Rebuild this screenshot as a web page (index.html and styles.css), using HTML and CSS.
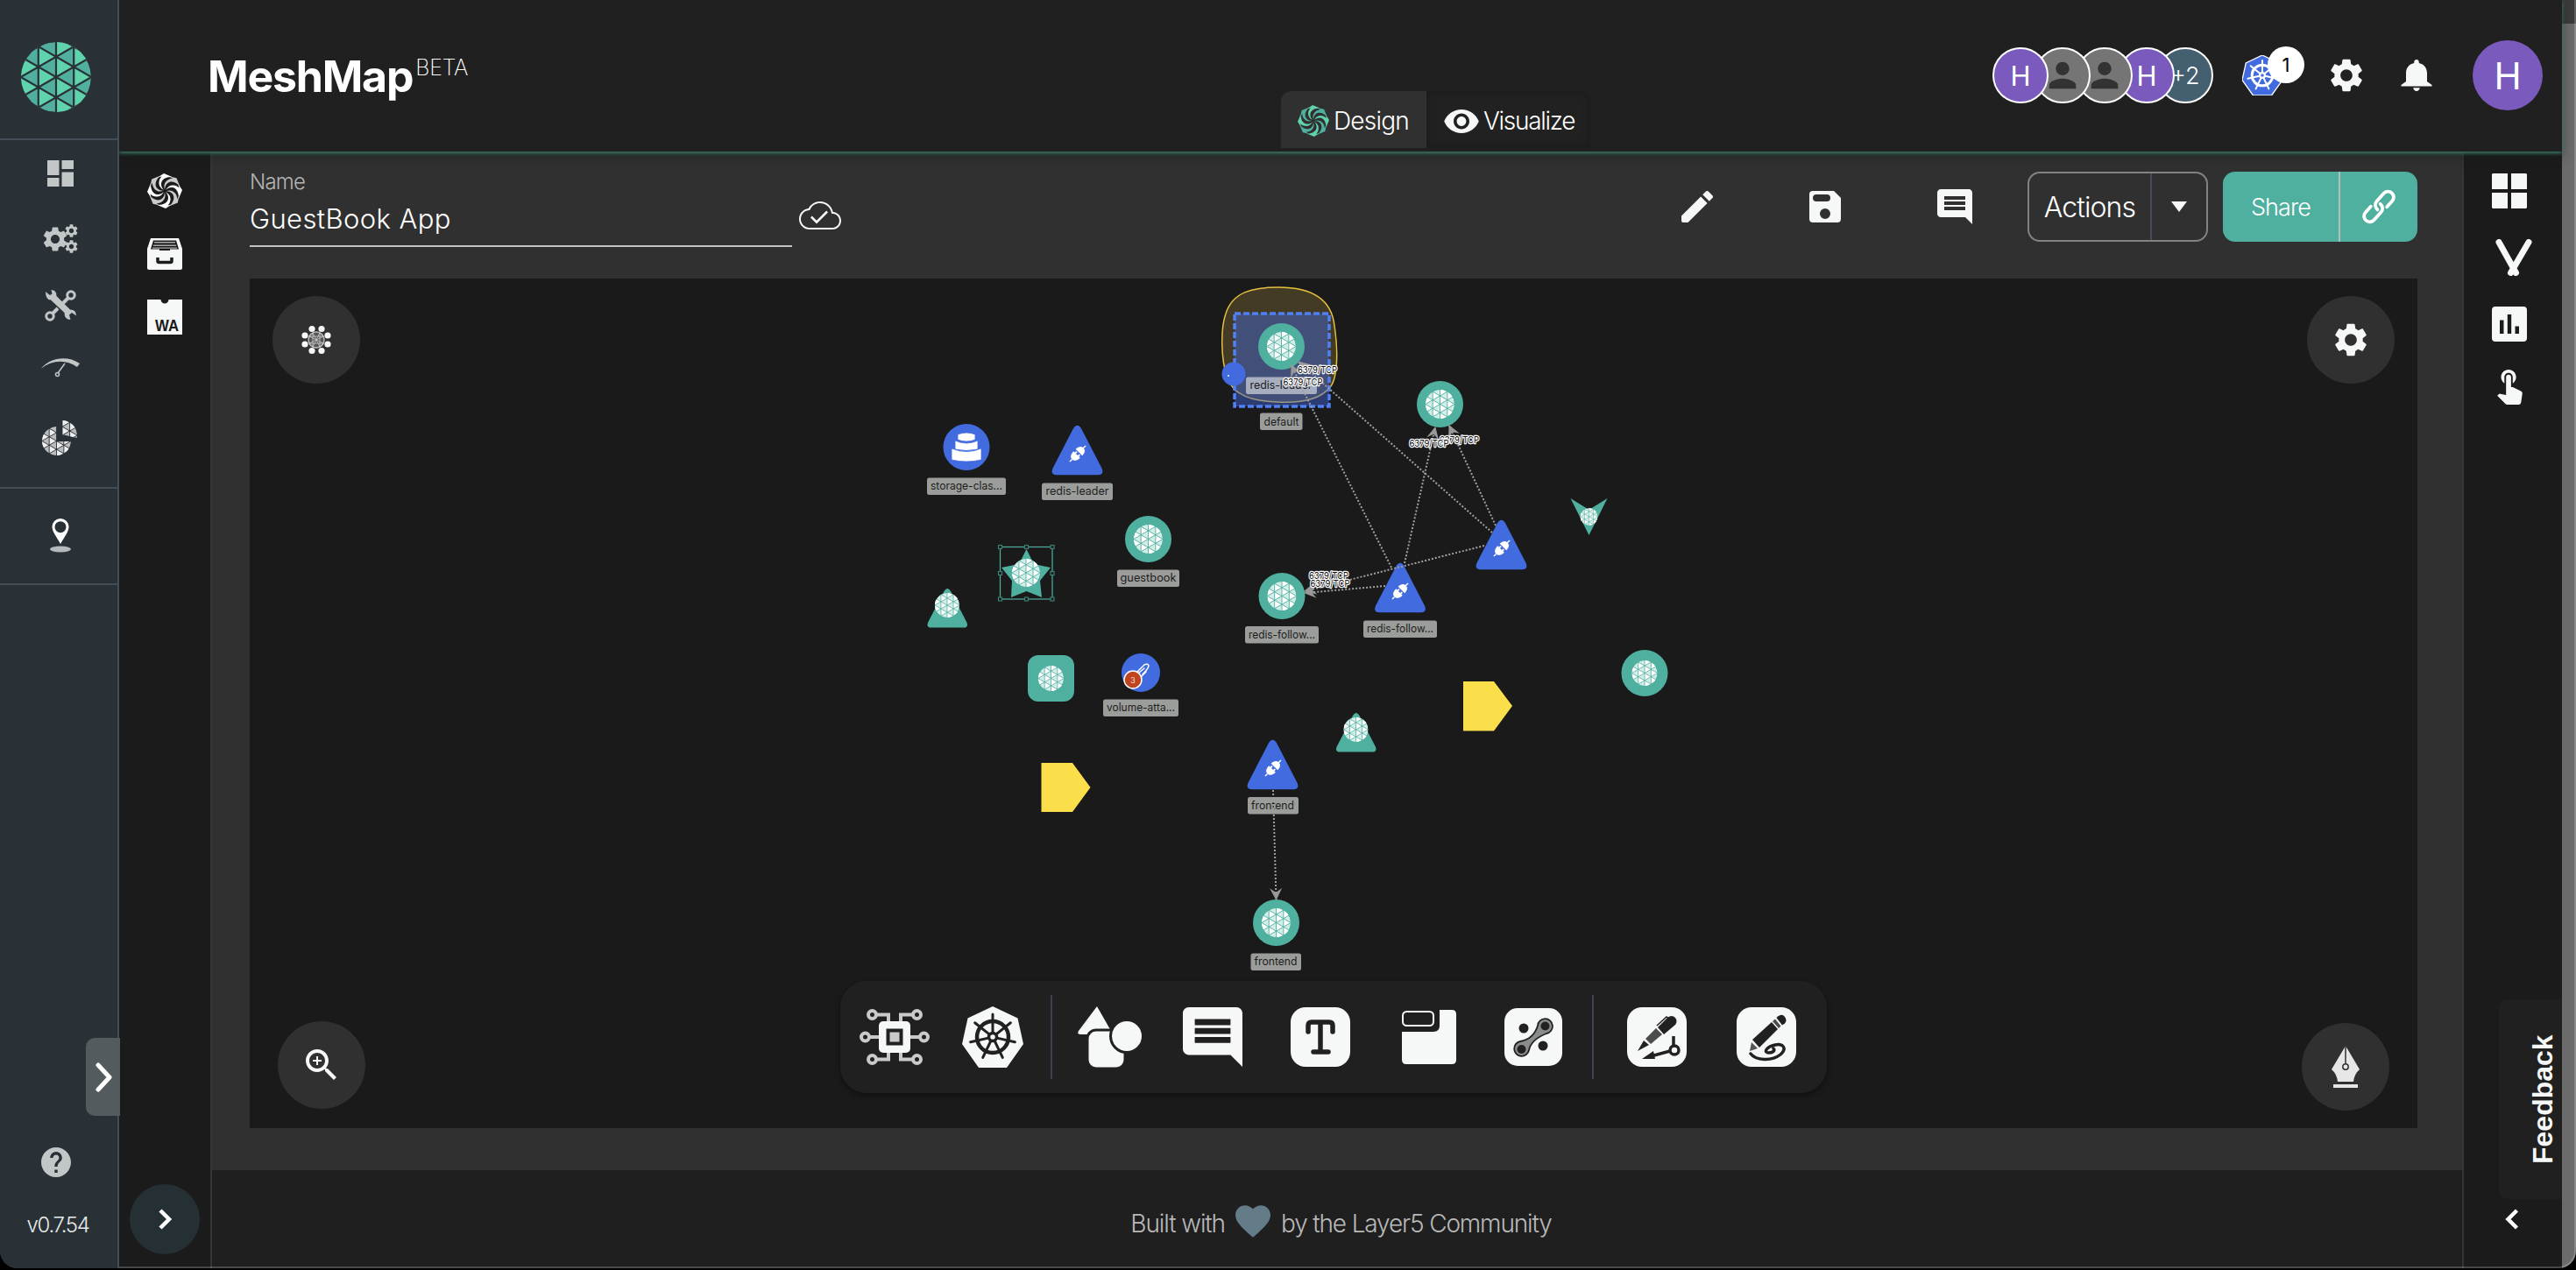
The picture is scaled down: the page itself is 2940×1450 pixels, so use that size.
FILE: index.html
```html
<!DOCTYPE html>
<html lang="en">
<head>
<meta charset="utf-8">
<title>MeshMap</title>
<link rel="stylesheet" href="styles.css">
</head>
<body>
<svg class="sprite" width="0" height="0">
  <defs>
    <clipPath id="disc"><circle r="40"/></clipPath>
    <symbol id="mesh" viewBox="-40 -40 80 80">
      <g clip-path="url(#disc)">
        <circle class="mesh-dark" r="40"/>
        <path class="mesh-light" d="M-40.4 0V23.2L-20.2 11.6zM-40.4 0V-23.2L-20.2 -11.6zM-20.2 -34.8V-11.6L0 -23.2zM-20.2 -11.6V11.6L0 0zM-20.2 11.6V34.8L0 23.2zM0 -46.4V-23.2L20.2 -34.8zM0 -23.2V0L20.2 -11.6zM0 0V23.2L20.2 11.6zM0 23.2V46.4L20.2 34.8zM20.2 -34.8V-11.6L40.4 -23.2zM20.2 -11.6V11.6L40.4 0zM20.2 11.6V34.8L40.4 23.2z"/>
        <path class="mesh-gap" d="M0 -42V42M-20.2 -42V42M20.2 -42V42M-40.4 -23.2L40.4 23.2M-40.4 23.2L40.4 -23.2M-40.4 -46.4L40.4 0M-40.4 0L40.4 46.4M-40.4 46.4L40.4 0M-40.4 0L40.4 -46.4M-40.4 -69.6L40.4 -23.2M-40.4 -23.2L40.4 -69.6M-40.4 69.6L40.4 23.2M-40.4 23.2L40.4 69.6"/>
      </g>
    </symbol>
    <path id="blade" d="M-11 -13.500L-1 -20L8.500 -16C1 -16.200 -3.500 -13 -4 -8.500C-4.200 -5.500 -3 -3 -1 -1.200C-5 -3 -7 -6.500 -6.500 -10.500C-6.200 -13 -5 -15 -3.500 -16.500C-7 -15.800 -9 -14.800 -11 -13.500z"/>
    <symbol id="swirl" viewBox="-20 -20 40 40">
      <g class="sw-a"><use href="#blade"/><use href="#blade" transform="rotate(90)"/><use href="#blade" transform="rotate(180)"/><use href="#blade" transform="rotate(270)"/></g>
      <g class="sw-b"><use href="#blade" transform="rotate(45)"/><use href="#blade" transform="rotate(135)"/><use href="#blade" transform="rotate(225)"/><use href="#blade" transform="rotate(315)"/></g>
    </symbol>
    <symbol id="cog" viewBox="2 2 20 20"><path d="M19.14 12.94c.04-.3.06-.61.06-.94 0-.32-.02-.64-.07-.94l2.030-1.580c.18-.14.23-.41.12-.61l-1.920-3.320c-.12-.22-.37-.29-.59-.22l-2.390.96c-.5-.38-1.030-.7-1.620-.94l-.36-2.540c-.04-.24-.24-.41-.48-.41h-3.840c-.24 0-.43.17-.47.41l-.36 2.540c-.59.24-1.130.57-1.620.94l-2.390-.96c-.22-.08-.47 0-.59.22L2.740 8.870c-.12.21-.08.47.12.61l2.030 1.580c-.05.3-.09.63-.09.94s.02.64.07.94l-2.030 1.580c-.18.14-.23.41-.12.61l1.920 3.320c.12.22.37.29.59.22l2.390-.96c.5.38 1.030.7 1.620.94l.36 2.540c.05.24.24.41.48.41h3.840c.24 0 .44-.17.47-.41l.36-2.540c.59-.24 1.130-.56 1.620-.94l2.390.96c.22.08.47 0 .59-.22l1.920-3.320c.12-.22.07-.47-.12-.61l-2.010-1.580zM12 15.6c-1.980 0-3.600-1.620-3.600-3.600s1.620-3.600 3.600-3.600 3.600 1.620 3.600 3.600-1.620 3.600-3.600 3.600z"/></symbol>
    <symbol id="person" viewBox="0 0 24 24"><path d="M12 12c2.210 0 4-1.790 4-4s-1.790-4-4-4-4 1.790-4 4 1.790 4 4 4zm0 2c-2.670 0-8 1.340-8 4v2h16v-2c0-2.660-5.330-4-8-4z"/></symbol>
    <symbol id="comment" viewBox="2 2 20 20"><path d="M21.990 4c0-1.100-.89-2-1.990-2H4c-1.100 0-2 .9-2 2v12c0 1.100.9 2 2 2h14l4 4-.01-18zM18 14H6v-2h12v2zm0-3H6V9h12v2zm0-3H6V6h12v2z"/></symbol>
    <symbol id="helm" viewBox="-35 -35 70 70">
      <path class="helm-bg" d="M0 -35L28.500 -21.500L35 8L16 35H-16L-35 8L-28.500 -21.500z"/>
      <g class="helm-fg">
        <circle r="18" fill="none" stroke-width="4.500"/>
        <g stroke-width="3">
          <path d="M0 -5V-26"/><path d="M0 -5V-26" transform="rotate(51.430)"/><path d="M0 -5V-26" transform="rotate(102.860)"/><path d="M0 -5V-26" transform="rotate(154.290)"/><path d="M0 -5V-26" transform="rotate(205.710)"/><path d="M0 -5V-26" transform="rotate(257.140)"/><path d="M0 -5V-26" transform="rotate(308.570)"/>
        </g>
        <circle r="4.500" fill="none" stroke-width="3.500"/>
      </g>
    </symbol>
    <symbol id="plug" viewBox="-12 -12 24 24">
      <g transform="rotate(45)" fill="#fff">
        <path d="M-.8 -14h1.600v4.500h-1.600zM-.8 14h1.600v-4.500h-1.600zM-5.800 -2.200C-5.800 -7.500 -3.500 -10 0 -10S5.800 -7.500 5.800 -2.200zM-5.800 1.500H5.800C5.800 7 3.500 10 0 10S-5.800 7 -5.800 1.500zM-3.600 -1h2v3h-2zM1.600 -1h2v3h-2z"/>
      </g>
    </symbol>
    <symbol id="tri" viewBox="0 0 60 58"><path d="M25 4.500Q30 -4 35 4.500L58.500 50Q61.500 57.500 54 57.800H6Q-1.500 57.500 1.500 50z"/></symbol>
    <marker id="vee" viewBox="0 0 14 14" refX="13" refY="7" markerWidth="14" markerHeight="14" markerUnits="userSpaceOnUse" orient="auto"><path d="M0 0L14 7L0 14L5 7z" fill="#999"/></marker>
  </defs>
</svg>

<div class="window">
  <aside class="sidebar">
    <div class="brand"><svg class="mesh" width="80" height="80"><use href="#mesh"/></svg></div>
    <nav class="nav">
      <a><svg width="30" height="30" viewBox="0 0 30 30"><path d="M0 0h13.500v17H0zM16.500 0H30v10H16.500zM0 20h13.500v10H0zM16.500 13.500H30V30H16.500z"/></svg></a>
      <a><svg width="42" height="34" viewBox="0 0 42 34"><use href="#cog" x="1" y="3" width="28" height="28"/><use href="#cog" x="26" y="0" width="15" height="15"/><use href="#cog" x="26" y="18" width="15" height="15"/></svg></a>
      <a><svg width="36" height="36" viewBox="0 0 36 36"><g fill="none" stroke="#c3c6c7"><circle cx="30" cy="6" r="4.200" stroke-width="3"/><circle cx="6" cy="30" r="4.200" stroke-width="3"/><path d="M27 9L21 15M15 21L9 27" stroke-width="4"/></g><path d="M1 2l5 4 2.500-1.500-1-4.500q6 0 6 7l15.500 15.500q7 0 7 7l-5-3.500-3 2.500 1.500 5.500q-7 0-7-8L7 11.500q-6 0-6-9.500z"/></svg></a>
      <a><svg width="44" height="24" viewBox="0 0 44 24"><path d="M0 13C9 1 29 -3 44 7l-3 4C28 2 12 3 0 13z"/><path d="M19 18L27 7" fill="none" stroke="#c3c6c7" stroke-width="1.500"/><circle cx="18.500" cy="19.500" r="2" fill="none" stroke="#c3c6c7" stroke-width="1.500"/></svg></a>
      <a><svg class="mesh mesh-grey" width="40" height="40" viewBox="0 0 40 40"><defs><clipPath id="body"><path d="M0 0H17V24L33 24V40H0z"/></clipPath><clipPath id="slice"><path d="M23 0H40V20L23 16z"/></clipPath></defs><g clip-path="url(#body)"><use href="#mesh" x="0" y="7" width="33" height="33"/></g><g clip-path="url(#slice)"><use href="#mesh" x="6" y="0" width="34" height="34"/></g></svg></a>
    </nav>
    <div class="nav-map"><svg width="26" height="40" viewBox="0 0 26 40"><path fill="#fff" fill-rule="evenodd" d="M13 29C8 20 3.500 15 3.500 9.500a9.500 9.500 0 0 1 19 0C22.500 15 18 20 13 29zM13 3.200a6.500 6.500 0 1 0 0 13 6.500 6.500 0 0 0 0-13z"/><ellipse cx="13" cy="35" rx="12" ry="3.500" fill="#b5babc"/></svg></div>
    <div class="side-foot">
      <svg width="34" height="34" viewBox="2 2 20 20"><path d="M12 2C6.480 2 2 6.480 2 12s4.480 10 10 10 10-4.480 10-10S17.520 2 12 2zm1 17h-2v-2h2v2zm2.070-7.750l-.9.92C13.450 12.900 13 13.500 13 15h-2v-.5c0-1.100.45-2.100 1.170-2.830l1.240-1.260c.37-.36.59-.86.59-1.410 0-1.100-.9-2-2-2s-2 .9-2 2H8c0-2.210 1.790-4 4-4s4 1.790 4 4c0 .88-.36 1.680-.93 2.250z"/></svg>
      <span class="version">v0.7.54</span>
    </div>
    <button class="side-toggle"><svg width="20" height="36" viewBox="0 0 20 36"><path d="M3 4L16 18L3 32" fill="none" stroke="#fff" stroke-width="5" stroke-linecap="round" stroke-linejoin="round"/></svg></button>
  </aside>

  <div class="app">
    <header class="header">
      <h1 class="title">MeshMap<span class="beta">BETA</span></h1>
      <div class="tabs">
        <div class="tab active"><svg class="swirl-green" width="36" height="36"><use href="#swirl"/></svg><span class="t-design">Design</span></div>
        <div class="tab"><svg width="40" height="27" viewBox="1 4.500 22 15"><path d="M12 4.500C7 4.500 2.730 7.610 1 12c1.730 4.390 6 7.500 11 7.500s9.270-3.110 11-7.500c-1.730-4.390-6-7.500-11-7.500zM12 17c-2.760 0-5-2.240-5-5s2.240-5 5-5 5 2.240 5 5-2.240 5-5 5zm0-8c-1.660 0-3 1.340-3 3s1.340 3 3 3 3-1.340 3-3-1.340-3-3-3z"/></svg><span class="t-visual">Visualize</span></div>
      </div>
      <div class="header-right">
        <div class="avatars">
          <span class="av purple">H</span>
          <span class="av grey"><svg width="46" height="46"><use href="#person"/></svg></span>
          <span class="av grey"><svg width="46" height="46"><use href="#person"/></svg></span>
          <span class="av purple">H</span>
          <span class="av more">+2</span>
        </div>
        <div class="k8s"><svg class="helm-blue" width="46" height="46"><use href="#helm"/></svg><span class="badge">1</span></div>
        <svg class="h-cog" width="38" height="38"><use href="#cog"/></svg>
        <svg class="h-bell" width="36" height="36" viewBox="2.250 2.500 19.500 19.500"><path d="M12 22c1.100 0 2-.9 2-2h-4c0 1.100.89 2 2 2zm6.500-6v-5c0-3.070-1.640-5.640-5-6.320V4c0-.83-.67-1.500-1.500-1.500s-1.500.67-1.500 1.500v.68C7.130 5.360 5.500 7.920 5.500 11v5l-3 2.200v.8h19v-.8z"/></svg>
        <span class="me">H</span>
      </div>
    </header>

    <div class="body">
      <div class="rail left-rail">
        <svg class="swirl-white" width="40" height="40"><use href="#swirl"/></svg>
        <svg width="40" height="36" viewBox="0 0 40 36"><path d="M4 0H36L40 12V34Q40 36 38 36H2Q0 36 0 34V12z"/><path d="M7 2.500H33L36 12.500H26V14H14V12.500H4z" fill="#1b1b1b"/><path d="M8 4H32v1.600H8zM7 7.500H33v1.600H7zM6 10.500H34v1.200H6z" fill="#aaa"/><path d="M12 22v4q0 1.500 1.500 1.500h13Q28 27.500 28 26v-4" fill="none" stroke="#1b1b1b" stroke-width="3.500"/></svg>
        <svg width="40" height="40" viewBox="0 0 40 40"><path d="M0 0H15.500a4.500 4.500 0 0 0 9 0H40V40H0z"/><text class="wa" x="9" y="36" textLength="27" lengthAdjust="spacingAndGlyphs">WA</text></svg>
        <button class="rail-toggle"><svg width="16" height="24" viewBox="0 0 16 24"><path d="M3 2L13 12L3 22" fill="none" stroke="#fff" stroke-width="4.500"/></svg></button>
      </div>

      <main class="main">
        <div class="bar">
          <div class="field"><label>Name</label><div class="value">GuestBook App</div></div>
          <svg class="cloud" width="48" height="48" viewBox="0 0 24 24"><path d="M19.350 10.040C18.670 6.590 15.640 4 12 4 9.110 4 6.610 5.640 5.360 8.040 2.350 8.360 0 10.900 0 14c0 3.310 2.690 6 6 6h13c2.760 0 5-2.240 5-5 0-2.640-2.050-4.780-4.650-4.960zM19 19H6c-2.800 0-5-2.200-5-5 0-2.500 1.900-4.700 4.600-5l.5-.05.25-.45C7.300 6.200 9.500 5 12 5c3.100 0 5.800 2.200 6.400 5.250l.15.75.75.050c2.100.15 3.700 1.850 3.700 3.950 0 2.200-1.800 4-4 4zM10 14.900l-2.600-2.600-.9.9L10 16.700l6.500-6.500-.9-.9z"/></svg>
          <div class="tools">
            <svg width="36" height="36" viewBox="3 3 18 18"><path d="M3 17.250V20q0 1 1 1h2.750L17.810 9.940l-3.750-3.750L3 17.250zM20.710 7.040c.39-.39.39-1.020 0-1.410l-2.340-2.340c-.39-.39-1.020-.39-1.410 0l-1.830 1.830 3.750 3.750 1.830-1.830z"/></svg>
            <svg width="36" height="36" viewBox="0 0 36 36"><path fill-rule="evenodd" d="M4 0H28L36 8V32Q36 36 32 36H4Q0 36 0 32V4Q0 0 4 0zM8 4a4 4 0 0 0 0 8H20a4 4 0 0 0 0-8zM18 20a6 6 0 1 0 0 12 6 6 0 0 0 0-12z"/></svg>
            <svg width="40" height="40"><use href="#comment"/></svg>
          </div>
          <div class="actions"><span>Actions</span><i><svg width="18" height="12" viewBox="0 0 18 12"><path d="M0 0H18L9 12z"/></svg></i></div>
          <div class="share"><span>Share</span><i><svg width="42" height="42" viewBox="-21 -21 42 42"><g transform="rotate(-48)" fill="none" stroke="#fff" stroke-width="3.800" stroke-linecap="round"><path d="M-6 -7H-15A6.500 6.500 0 0 0 -15 6H-3A6.500 6.500 0 0 0 3.500 -1"/><path d="M6 7H15A6.500 6.500 0 0 0 15 -6H3A6.500 6.500 0 0 0 -3.500 1"/></g></svg></i></div>
        </div>

        <div class="canvas">
          <svg class="graph" viewBox="285 318 2474 970">
            <path d="M1459 328C1500 328 1520 343 1523 372C1528 405 1526 435 1517 443C1505 458 1480 460 1458 459C1430 458 1408 452 1401 432C1393 410 1393 375 1399 358C1407 333 1430 328 1459 328z" fill="#443b25" stroke="#e5bf3f" stroke-width="1.500"/>
            <rect x="1409" y="358" width="108" height="106" fill="#4169e1" fill-opacity=".45" stroke="#4f80f5" stroke-width="3.500" stroke-dasharray="7 3"/>
            <circle cx="1408" cy="427" r="13.500" fill="#426bdf"/><circle cx="1402" cy="429" r="1" fill="#fff"/>

            <g class="green">
              <circle cx="1462.500" cy="395.500" r="26.500"/><circle cx="1643.500" cy="461.500" r="26.500"/><circle cx="1310.500" cy="615.500" r="26.500"/><circle cx="1463" cy="680.500" r="26.500"/><circle cx="1877" cy="768.500" r="26.500"/><circle cx="1456.500" cy="1053.500" r="26.500"/>
              <rect x="1173" y="748" width="53" height="53" rx="12"/>
              <path d="M1171.500 627L1180 644L1199 648L1187 663L1189 682L1171.500 675L1154 682L1155 663L1143 648L1163 644z"/>
              <use href="#tri" x="1058" y="671" width="46.500" height="46.500"/><use href="#tri" x="1524.500" y="813" width="46.500" height="46.500"/>
              <path d="M1792.500 569L1813.500 582L1834.500 569L1813.500 611z"/>
            </g>
            <g class="mesh mesh-white">
              <use href="#mesh" x="1446" y="379" width="33" height="33"/><use href="#mesh" x="1627" y="445" width="33" height="33"/><use href="#mesh" x="1294" y="599" width="33" height="33"/><use href="#mesh" x="1446.500" y="664" width="33" height="33"/><use href="#mesh" x="1862.500" y="754" width="29" height="29"/><use href="#mesh" x="1440" y="1037" width="33" height="33"/><use href="#mesh" x="1185" y="760" width="29" height="29"/><use href="#mesh" x="1155" y="638" width="32" height="32"/><use href="#mesh" x="1067" y="677" width="28" height="28"/><use href="#mesh" x="1533.500" y="819" width="28" height="28"/><use href="#mesh" x="1803.500" y="580" width="20" height="20"/>
            </g>
            <g class="blue">
              <circle cx="1103" cy="510.500" r="26.500"/><circle cx="1302" cy="768" r="22"/>
              <use href="#tri" x="1200" y="485" width="59" height="58"/><use href="#tri" x="1423" y="844" width="59" height="58"/><use href="#tri" x="1684" y="593" width="59" height="58"/><use href="#tri" x="1568.500" y="642" width="59" height="58"/>
            </g>
            <use href="#plug" x="1219" y="507" width="22" height="22"/><use href="#plug" x="1442" y="866" width="22" height="22"/><use href="#plug" x="1703" y="615" width="22" height="22"/><use href="#plug" x="1587" y="664" width="22" height="22"/>
            <path d="M1093 496Q1103 492 1113 496V502Q1103 506 1093 502zM1090 503Q1103 509 1116 503V513Q1103 516 1090 513zM1086 512Q1103 519 1120 512V525Q1103 529 1086 525z" fill="#fff" stroke="#426bdf" stroke-width=".8"/>
            <g fill="none" stroke="#fff" stroke-width="1.500" stroke-linecap="round"><path d="M1297 768L1306 759Q1310 757 1311 760Q1311 763 1304 770M1300 768L1306 763M1302 773L1308 767"/></g>
            <circle cx="1293" cy="776" r="10" fill="#c0441f" stroke="#fff" stroke-width="1.500"/><text class="count" x="1293" y="779.500">3</text>
            <path d="M1188.500 871H1224L1244.500 899L1224 927H1188.500zM1670 778H1705L1726 806L1705 834.500H1670z" fill="#fbdf4a"/>
            <g fill="none" stroke="#50af9f" stroke-width="1.200"><rect x="1141.500" y="624.500" width="59.500" height="59.500"/><g fill="#1a1a1a" stroke="#3c7f74"><rect x="1139.500" y="622.500" width="4" height="4"/><rect x="1169.500" y="622.500" width="4" height="4"/><rect x="1199" y="622.500" width="4" height="4"/><rect x="1139.500" y="652.500" width="4" height="4"/><rect x="1199" y="652.500" width="4" height="4"/><rect x="1139.500" y="682" width="4" height="4"/><rect x="1169.500" y="682" width="4" height="4"/><rect x="1199" y="682" width="4" height="4"/></g></g>

            <g class="tags">
              <rect x="1422" y="430.500" width="81" height="19.500" rx="2.500" fill="#a7aec0"/><rect x="1438" y="471.500" width="48.500" height="19.500" rx="2.500"/><rect x="1058" y="545.500" width="90" height="19.500" rx="2.500"/><rect x="1189" y="551.500" width="81" height="19.500" rx="2.500"/><rect x="1275" y="650.500" width="71" height="19.500" rx="2.500"/><rect x="1421" y="715" width="84" height="19.500" rx="2.500"/><rect x="1556" y="708.500" width="84" height="19.500" rx="2.500"/><rect x="1259" y="798.500" width="86" height="19.500" rx="2.500"/><rect x="1424" y="910" width="58" height="19.500" rx="2.500"/><rect x="1427.500" y="1088.500" width="57.500" height="19.500" rx="2.500"/>
            </g>
            <g class="names">
              <text x="1426.500" y="444" textLength="71" lengthAdjust="spacingAndGlyphs">redis-leader</text><text x="1442.500" y="485.500" textLength="40" lengthAdjust="spacingAndGlyphs">default</text><text x="1062" y="559" textLength="82" lengthAdjust="spacingAndGlyphs">storage-clas...</text><text x="1193.500" y="565" textLength="72" lengthAdjust="spacingAndGlyphs">redis-leader</text><text x="1278.500" y="664" textLength="64" lengthAdjust="spacingAndGlyphs">guestbook</text><text x="1425" y="729" textLength="76" lengthAdjust="spacingAndGlyphs">redis-follow...</text><text x="1560" y="722" textLength="76" lengthAdjust="spacingAndGlyphs">redis-follow...</text><text x="1263" y="812" textLength="78" lengthAdjust="spacingAndGlyphs">volume-atta...</text><text x="1428" y="924" textLength="49" lengthAdjust="spacingAndGlyphs">frontend</text><text x="1431.500" y="1102" textLength="49" lengthAdjust="spacingAndGlyphs">frontend</text>
            </g>
            <g class="edges">
              <path d="M1588 648L1487 445L1474 417"/><path d="M1703 608L1482 413"/><path d="M1603 643L1638 488"/><path d="M1707 600L1654 486"/><path d="M1694 623L1489 675"/><path d="M1581 669L1489 677"/><path d="M1453 902L1456.500 1027"/>
            </g>
            <g class="ports">
              <text x="1481" y="426" textLength="45" lengthAdjust="spacingAndGlyphs">6379/TCP</text><text x="1464.500" y="439.500" textLength="45" lengthAdjust="spacingAndGlyphs">6379/TCP</text><text x="1643" y="505.500" textLength="45" lengthAdjust="spacingAndGlyphs">6379/TCP</text><text x="1608.500" y="509.500" textLength="45" lengthAdjust="spacingAndGlyphs">6379/TCP</text><text x="1494" y="661" textLength="45" lengthAdjust="spacingAndGlyphs">6379/TCP</text><text x="1495.500" y="669.500" textLength="45" lengthAdjust="spacingAndGlyphs">6379/TCP</text>
            </g>
          </svg>

          <button class="fab fab-layout"><svg width="34" height="34" viewBox="-17 -17 34 34"><circle r="9" fill="#555" stroke="#bbb" stroke-width="1.500"/><path d="M-8 -4L8 4M-8 4L8 -4M-4 -8L4 8M4 -8L-4 8M-8 -4H8M-8 4H8M-4 -8V8M4 -8V8" stroke="#ccc" stroke-width=".8"/><g><circle cx="-5" cy="-12.500" r="3.600"/><circle cx="6" cy="-12.500" r="3.600"/><circle cx="-5" cy="12.500" r="3.600"/><circle cx="6" cy="12.500" r="3.600"/><circle cx="-13" cy="-5" r="3.600"/><circle cx="13" cy="-5" r="3.600"/><circle cx="-13" cy="5" r="3.600"/><circle cx="13" cy="5" r="3.600"/></g></svg></button>
          <button class="fab fab-cog"><svg width="38" height="38"><use href="#cog"/></svg></button>
          <button class="fab fab-zoom"><svg width="48" height="48" viewBox="0 0 24 24"><path d="M15.500 14h-.79l-.28-.27C15.410 12.590 16 11.110 16 9.500 16 5.910 13.090 3 9.500 3S3 5.910 3 9.500 5.910 16 9.500 16c1.610 0 3.090-.59 4.230-1.570l.27.28v.79l5 4.990L20.490 19l-4.990-5zm-6 0C7.010 14 5 11.990 5 9.500S7.010 5 9.500 5 14 7.010 14 9.500 11.990 14 9.500 14zm2.500-4h-2v2H9v-2H7V9h2V7h1v2h2v1z"/></svg></button>
          <button class="fab fab-pen"><svg width="32" height="48" viewBox="0 0 32 48"><path d="M16 0L32 27Q26 32 25 41H7Q6 32 0 27zM2 44H30V48H2z" fill="#e6e6e6"/><path d="M16 0V21" stroke="#303030" stroke-width="1.500"/><circle cx="16" cy="24" r="3.200" fill="#e6e6e6" stroke="#303030" stroke-width="1.500"/></svg></button>

          <div class="dock">
            <div class="group g1">
              <svg width="80" height="66" viewBox="-40 -33 80 66"><g fill="none" stroke="#c9cbcb" stroke-width="4"><circle cx="-25.500" cy="-25.500" r="4.500"/><circle cx="25.500" cy="-25.500" r="4.500"/><circle cx="-25.500" cy="25.500" r="4.500"/><circle cx="25.500" cy="25.500" r="4.500"/><circle cx="-33.500" cy="0" r="4.500"/><circle cx="33.500" cy="0" r="4.500"/><path d="M-20 -25.500H-7V-17M20 -25.500H7V-17M-20 25.500H-7V17M20 25.500H7V17M-28 0H-18M28 0H18"/></g><rect x="-18" y="-18" width="36" height="36" rx="5"/><rect x="-7.500" y="-7.500" width="15" height="15" fill="#c9cbcb" stroke="#212121" stroke-width="4"/></svg>
              <svg class="helm-white" width="70" height="70"><use href="#helm"/></svg>
            </div>
            <div class="group g2">
              <svg width="74" height="74" viewBox="0 0 74 74"><path d="M22 2L38 30Q40 34 36 34H3Q-1 34 1 30z"/><rect x="11" y="29" width="43" height="44" rx="10" stroke="#212121" stroke-width="3"/><circle cx="56" cy="36" r="18.500" stroke="#212121" stroke-width="3"/></svg>
              <svg width="68" height="68"><use href="#comment"/></svg>
              <svg width="68" height="68" viewBox="0 0 68 68"><rect width="68" height="68" rx="17"/><path d="M20 28V21Q20 17 24 17H44Q48 17 48 21V28M34 17V51M26 51H43" fill="none" stroke="#212121" stroke-width="5.500" stroke-linecap="round"/></svg>
              <svg width="62" height="62" viewBox="0 0 62 62"><path d="M43 0H57Q62 0 62 5V57Q62 62 57 62H5Q0 62 0 57V25H36Q43 25 43 18z"/><rect x="1" y="2" width="35" height="16" rx="4.500" fill="none" stroke="#f6f8f7" stroke-width="2"/></svg>
              <svg width="66" height="66" viewBox="0 0 66 66"><rect width="66" height="66" rx="15"/><circle cx="22" cy="23" r="5.500" fill="#212121"/><circle cx="44" cy="43" r="5.500" fill="#212121"/><path d="M38 20A8.500 8.500 0 1 1 48 29C38 33 30 38 28 48A8.500 8.500 0 1 1 18 38C29 36 35 30 38 20z" fill="#8a8c8b" stroke="#212121" stroke-width="1.800"/><circle cx="46.500" cy="20.500" r="5" fill="#212121"/><circle cx="19.500" cy="47" r="5" fill="#212121"/></svg>
            </div>
            <div class="group g3">
              <svg width="68" height="68" viewBox="0 0 68 68"><rect width="68" height="68" rx="17"/><path d="M12 50L19 38L25 43z" fill="#212121"/><path d="M21 36L33 24L40 31L27 42z" fill="#4c4c4c"/><path d="M35 23L46 12Q51 8 55 12Q58 16 55 20L42 31z" fill="#212121"/><path d="M34 21L45 11L48 13" fill="none" stroke="#212121" stroke-width="1.500"/><path d="M53 33V43M49 50L27 56" fill="none" stroke="#212121" stroke-width="3.500"/><circle cx="54" cy="49" r="5" fill="none" stroke="#212121" stroke-width="3.500"/><path d="M17 59L30 50L32 59z" fill="#212121"/></svg>
              <svg width="68" height="68" viewBox="0 0 68 68"><rect width="68" height="68" rx="17"/><path d="M18 37L40 17L47 25L26 46z" fill="#212121"/><path d="M41 16L44 13.500L50.500 21.500L48 24z" fill="#4c4c4c"/><path d="M45.500 12L47 10.500Q52 7 55 11Q58 15 55 18.500L52 20.500z" fill="#212121"/><path d="M15 50L17 40L24 47z" fill="#555"/><path d="M16 53C22 61 40 62 50 54C58 47 53 41 44 43C34 45 30 52 37 52C42 52 44 49 42 47" fill="none" stroke="#212121" stroke-width="3.500" stroke-linecap="round"/></svg>
            </div>
          </div>
        </div>
        <footer class="footer"><span class="f1">Built with</span><svg width="40" height="37" viewBox="2 3 20 18.350"><path d="M12 21.350l-1.450-1.320C5.400 15.360 2 12.280 2 8.500 2 5.420 4.420 3 7.500 3c1.740 0 3.410.81 4.500 2.090C13.090 3.810 14.760 3 16.500 3 19.580 3 22 5.420 22 8.500c0 3.780-3.400 6.860-8.550 11.540L12 21.350z"/></svg><span class="f2">by the Layer5 Community</span></footer>
      </main>

      <div class="rail right-rail">
        <svg width="40" height="40" viewBox="0 0 40 40"><path d="M1 0H18V18H0V1zM22 0H39L40 1V18H22zM0 22H18V40H1L0 39zM22 22H40V39L39 40H22z"/></svg>
        <svg class="r-y" width="42" height="42" viewBox="0 0 42 42"><path d="M4 3.500L23.500 38.500M38 3.500L17.500 38.500" fill="none" stroke="#f6f8f7" stroke-width="7" stroke-linecap="round"/></svg>
        <svg width="40" height="40" viewBox="0 0 40 40"><path fill-rule="evenodd" d="M4 0H36Q40 0 40 4V36Q40 40 36 40H4Q0 40 0 36V4Q0 0 4 0zM9 15.500V31H13.500V15.500zM17.800 9V31H22.200V9zM26.500 22.500V31H31V22.500z"/></svg>
        <svg class="r-touch" width="40" height="40" viewBox="1.500 3 21 21"><path d="M9 11.240V7.500C9 6.120 10.120 5 11.500 5S14 6.120 14 7.500v3.740c1.210-.81 2-2.180 2-3.740C16 5.010 13.990 3 11.500 3S7 5.010 7 7.500c0 1.560.79 2.930 2 3.740zm9.840 4.630l-4.540-2.260c-.17-.07-.35-.11-.54-.11H13v-6c0-.83-.67-1.500-1.500-1.500S10 6.670 10 7.500v10.740l-3.430-.72c-.08-.01-.15-.03-.24-.03-.31 0-.59.13-.79.33l-.79.8 4.940 4.940c.27.27.65.44 1.060.44h6.790c.75 0 1.330-.55 1.440-1.280l.75-5.270c.01-.07.02-.14.02-.2 0-.62-.38-1.160-.91-1.380z"/></svg>
        <div class="feedback">Feedback</div>
        <svg class="r-chev" width="16" height="24" viewBox="0 0 16 24"><path d="M13.500 2L3.500 12L13.500 22" fill="none" stroke="#fff" stroke-width="4.500"/></svg>
      </div>
    </div>
  </div>
  <div class="scroll"><i></i></div>
</div>
</body>
</html>
```
FILE: styles.css
```css
* { box-sizing: border-box; }
body { margin: 0; width: 2940px; height: 1450px; overflow: hidden; background: #000; color: #fff; font-family: Inter, "Liberation Sans", sans-serif; font-weight: 300; }
svg { display: block; flex: none; fill: #f6f8f7; }
button { border: 0; padding: 0; }
i { font-style: normal; }
.sprite { position: absolute; }

.window { position: relative; display: flex; height: 1448px; border-radius: 0 0 20px 20px; overflow: hidden; background: #1b1b1b; }
.window::after { content: ""; position: absolute; inset: -2px 0 0; border: 2px solid rgba(255, 255, 255, .2); border-radius: 0 0 20px 20px; pointer-events: none; }

.mesh { --light: #5fd3ac; --dark: #50af9f; --gap: #293137; }
.mesh-white { --light: #fff; --dark: #d3ede8; --gap: #50af9f; }
.mesh-grey { --light: #f0f0f0; --dark: #b9bdbf; }
.mesh-dark { fill: var(--dark); }
.mesh-light { fill: var(--light); }
.mesh-gap { fill: none; stroke: var(--gap); stroke-width: 2.2; }
.sw-a { fill: var(--a); }
.sw-b { fill: var(--b); }
.swirl-green { --a: #5fd3ac; --b: #50af9f; }
.swirl-white { --a: #fff; --b: #c9cbcb; }
.helm-bg { fill: var(--bg); stroke: var(--edge); stroke-width: 2; }
.helm-fg { stroke: var(--fg); stroke-linecap: round; }
.helm-white { --bg: #f6f8f7; --fg: #212121; --edge: none; }
.helm-blue { --bg: #426bdf; --fg: #fff; --edge: #fff; }

/* primary navigation */
.sidebar { position: relative; z-index: 2; width: 136px; display: flex; flex-direction: column; background: #293137; border-right: 2px solid #434d57; }
.sidebar svg { fill: #c3c6c7; }
.brand { height: 160px; padding: 48px 0 0 24px; border-bottom: 2px solid #434d57; }
.nav { height: 398px; border-bottom: 2px solid #434d57; padding-left: 4px; }
.nav a { height: 75.500px; display: flex; align-items: center; justify-content: center; }
.nav a:nth-child(4) { height: 66px; }
.nav a:nth-child(5) { height: 94px; padding-right: 2px; }
.nav-map { height: 110px; border-bottom: 2px solid #434d57; display: flex; align-items: center; justify-content: center; padding-left: 4px; }
.side-foot { margin-top: auto; height: 138px; display: flex; flex-direction: column; align-items: center; gap: 39px; padding-right: 6px; }
.version { width: 80px; margin-left: 4px; text-align: center; font-size: 24px; line-height: 32px; letter-spacing: -1.300px; white-space: nowrap; color: #e8eaea; }
.side-toggle { position: absolute; left: 98px; top: 1185px; width: 39px; height: 89px; background: #535b5e; border-radius: 10px 0 0 10px; display: flex; align-items: center; justify-content: center; padding-left: 2px; }

/* header */
.app { width: 2788px; display: flex; flex-direction: column; }
.header { position: relative; z-index: 1; height: 173px; background: #202020; display: grid; grid-template-columns: 1326px auto 1fr; box-shadow: 0 2px 4px #3b7a6b, 0 6px 12px rgba(20, 30, 28, .45); }
.title { margin: 55px 0 0 101px; font-size: 50px; line-height: 64px; font-weight: 700; letter-spacing: -1.200px; display: flex; align-items: flex-start; }
.beta { font-size: 25px; line-height: 44px; font-weight: 200; letter-spacing: -.2px; margin-left: 3px; }
.tabs { align-self: end; display: flex; height: 65px; margin-bottom: 4px; border-radius: 12px 12px 0 0; overflow: hidden; }
.tab { display: flex; align-items: center; gap: 5px; font-size: 28px; padding: 3px 0 0 20px; width: 187px; white-space: nowrap; background: #212121; box-shadow: inset 0 0 10px #1a1a1a; }
.tab.active { width: 166px; background: #303030; box-shadow: none; padding-left: 19px; }
.t-design { letter-spacing: -.8px; }
.t-visual { letter-spacing: -1.300px; }
.header-right { display: flex; justify-content: flex-end; align-items: center; height: 172px; padding-right: 22px; }
.avatars { display: flex; isolation: isolate; }
.av { position: relative; width: 64px; height: 64px; border: 2px solid #fff; border-radius: 50%; display: flex; align-items: center; justify-content: center; font-size: 31px; font-weight: 400; margin-right: -16px; }
.av svg { fill: #333; }
.av:nth-child(1) { z-index: 5; } .av:nth-child(2) { z-index: 4; } .av:nth-child(3) { z-index: 3; } .av:nth-child(4) { z-index: 2; }
.purple { background: #7a5abd; }
.grey { background: #757575; }
.more { background: #435f70; margin: 0 0 0 -4px; font-size: 27px; font-weight: 300; }
.k8s { position: relative; margin-left: 33px; }
.badge { position: absolute; left: 29px; top: -10px; width: 42px; height: 42px; border-radius: 50%; background: #fff; color: #000; font-size: 22px; font-weight: 400; display: flex; align-items: center; justify-content: center; }
.h-cog { margin-left: 54px; }
.h-bell { margin-left: 43px; }
.me { width: 80px; height: 80px; margin-left: 46px; border-radius: 50%; background: #7a5abd; display: flex; align-items: center; justify-content: center; font-size: 42px; font-weight: 400; }

/* rails */
.body { flex: 1; display: flex; }
.rail { position: relative; background: #1b1b1b; display: flex; flex-direction: column; align-items: center; }
.left-rail { width: 106px; border-right: 2px solid #353535; padding-top: 25px; gap: 34px; }
.wa { font: 700 19px "Liberation Sans", sans-serif; fill: #1b1b1b; }
.rail-toggle { position: absolute; left: 12px; bottom: 16px; width: 80px; height: 80px; border-radius: 50%; background: #253034; display: flex; align-items: center; justify-content: center; }
.right-rail { width: 114px; border-left: 2px solid #353535; padding: 25px 8px 0 0; gap: 36px; }
.right-rail .r-y { margin: -1px 0 -1px 9px; }
.right-rail .r-touch { margin-top: -4px; }
.feedback { position: absolute; right: 0; top: 968px; width: 72px; height: 228px; background: #202020; writing-mode: vertical-rl; transform: rotate(180deg); border-radius: 0 10px 10px 0; display: flex; align-items: center; justify-content: center; padding: 0 27px 0 0; font: 700 32px/48px "Liberation Sans", sans-serif; color: #f6f8f7; }
.r-chev { position: absolute; left: 47px; top: 1207px; }

/* workspace */
.main { width: 2568px; background: #303030; display: flex; flex-direction: column; }
.bar { height: 145px; padding: 23px 51px 0 43px; display: flex; }
.field { width: 619px; height: 86px; border-bottom: 2px solid #c3c3c3; white-space: nowrap; }
.field label { display: block; font-size: 24px; line-height: 24px; color: #b5b5b5; letter-spacing: -.8px; }
.value { font-size: 31px; line-height: 59px; letter-spacing: .4px; }
.cloud { margin: 26px 0 0 8px; }
.tools { display: flex; align-items: center; height: 80px; margin-left: 959px; gap: 110px; }
.actions, .share { display: flex; height: 80px; border-radius: 14px; }
.actions { width: 206px; margin-left: 63px; border: 2px solid #828282; font-size: 32px; }
.actions span { width: 140px; display: flex; align-items: center; justify-content: center; border-right: 2px solid #454b59; letter-spacing: -.9px; }
.actions i, .share i { flex: 1; display: flex; align-items: center; justify-content: center; }
.share { width: 222px; margin-left: 17px; background: #50b0a0; font-size: 27px; }
.share span { width: 134px; display: flex; align-items: center; justify-content: center; border-right: 2px solid #b3bdba; letter-spacing: -.9px; }
.canvas { position: relative; height: 970px; margin: 0 51px 0 43px; background: #1a1a1a; }
.footer { margin-top: 48px; height: 112px; background: #1f1f1f; display: flex; align-items: center; justify-content: center; padding: 9px 0 0 9px; font-size: 28px; color: #b9b9b9; white-space: nowrap; }
.footer svg { fill: #647b88; margin: -4px 12px 0 12px; }
.f1 { letter-spacing: -1.100px; }
.f2 { letter-spacing: -1.150px; }

/* graph */
.graph { width: 2474px; height: 970px; }
.green { fill: #50b0a0; }
.blue { fill: #426bdf; }
.tags { fill: #9b9d9a; }
.names { font-size: 12.5px; font-weight: 400; fill: #1d1d1d; }
.count { font-size: 9px; fill: #fff; text-anchor: middle; }
.edges path { fill: none; stroke: #a0a0a0; stroke-width: 2; stroke-dasharray: 2 2; marker-end: url(#vee); }
.ports { font-size: 11px; font-weight: 400; fill: #111; stroke: #fff; stroke-width: 2.5px; stroke-linejoin: round; paint-order: stroke; }

.fab { position: absolute; width: 100px; height: 100px; border-radius: 50%; background: #303030; display: flex; align-items: center; justify-content: center; }
.fab-layout { left: 26px; top: 20px; }
.fab-cog { right: 26px; top: 20px; }
.fab-zoom { left: 32px; bottom: 22px; }
.fab-pen { right: 32px; bottom: 20px; }

.dock { position: absolute; left: 674px; bottom: 40px; width: 1126px; height: 128px; padding-left: 22px; border-radius: 30px; background: #202020; box-shadow: 0 3px 6px rgba(0, 0, 0, .4); display: flex; align-items: center; }
.group { display: flex; align-items: center; height: 96px; }
.g1 { gap: 37px; padding-right: 31px; }
.g2 { gap: 55px; padding: 0 34px 0 29px; border-left: 2px solid #3d4250; border-right: 2px solid #3d4250; }
.g2 svg:first-child { margin-right: -9px; }
.g2 svg:nth-child(3) { margin-right: 4px; }
.g3 { gap: 57px; padding-left: 38px; }

.scroll { width: 16px; background: #3b3b3b; padding-top: 27px; }
.scroll i { display: block; height: 100%; background: #6b6b6b; }
```
